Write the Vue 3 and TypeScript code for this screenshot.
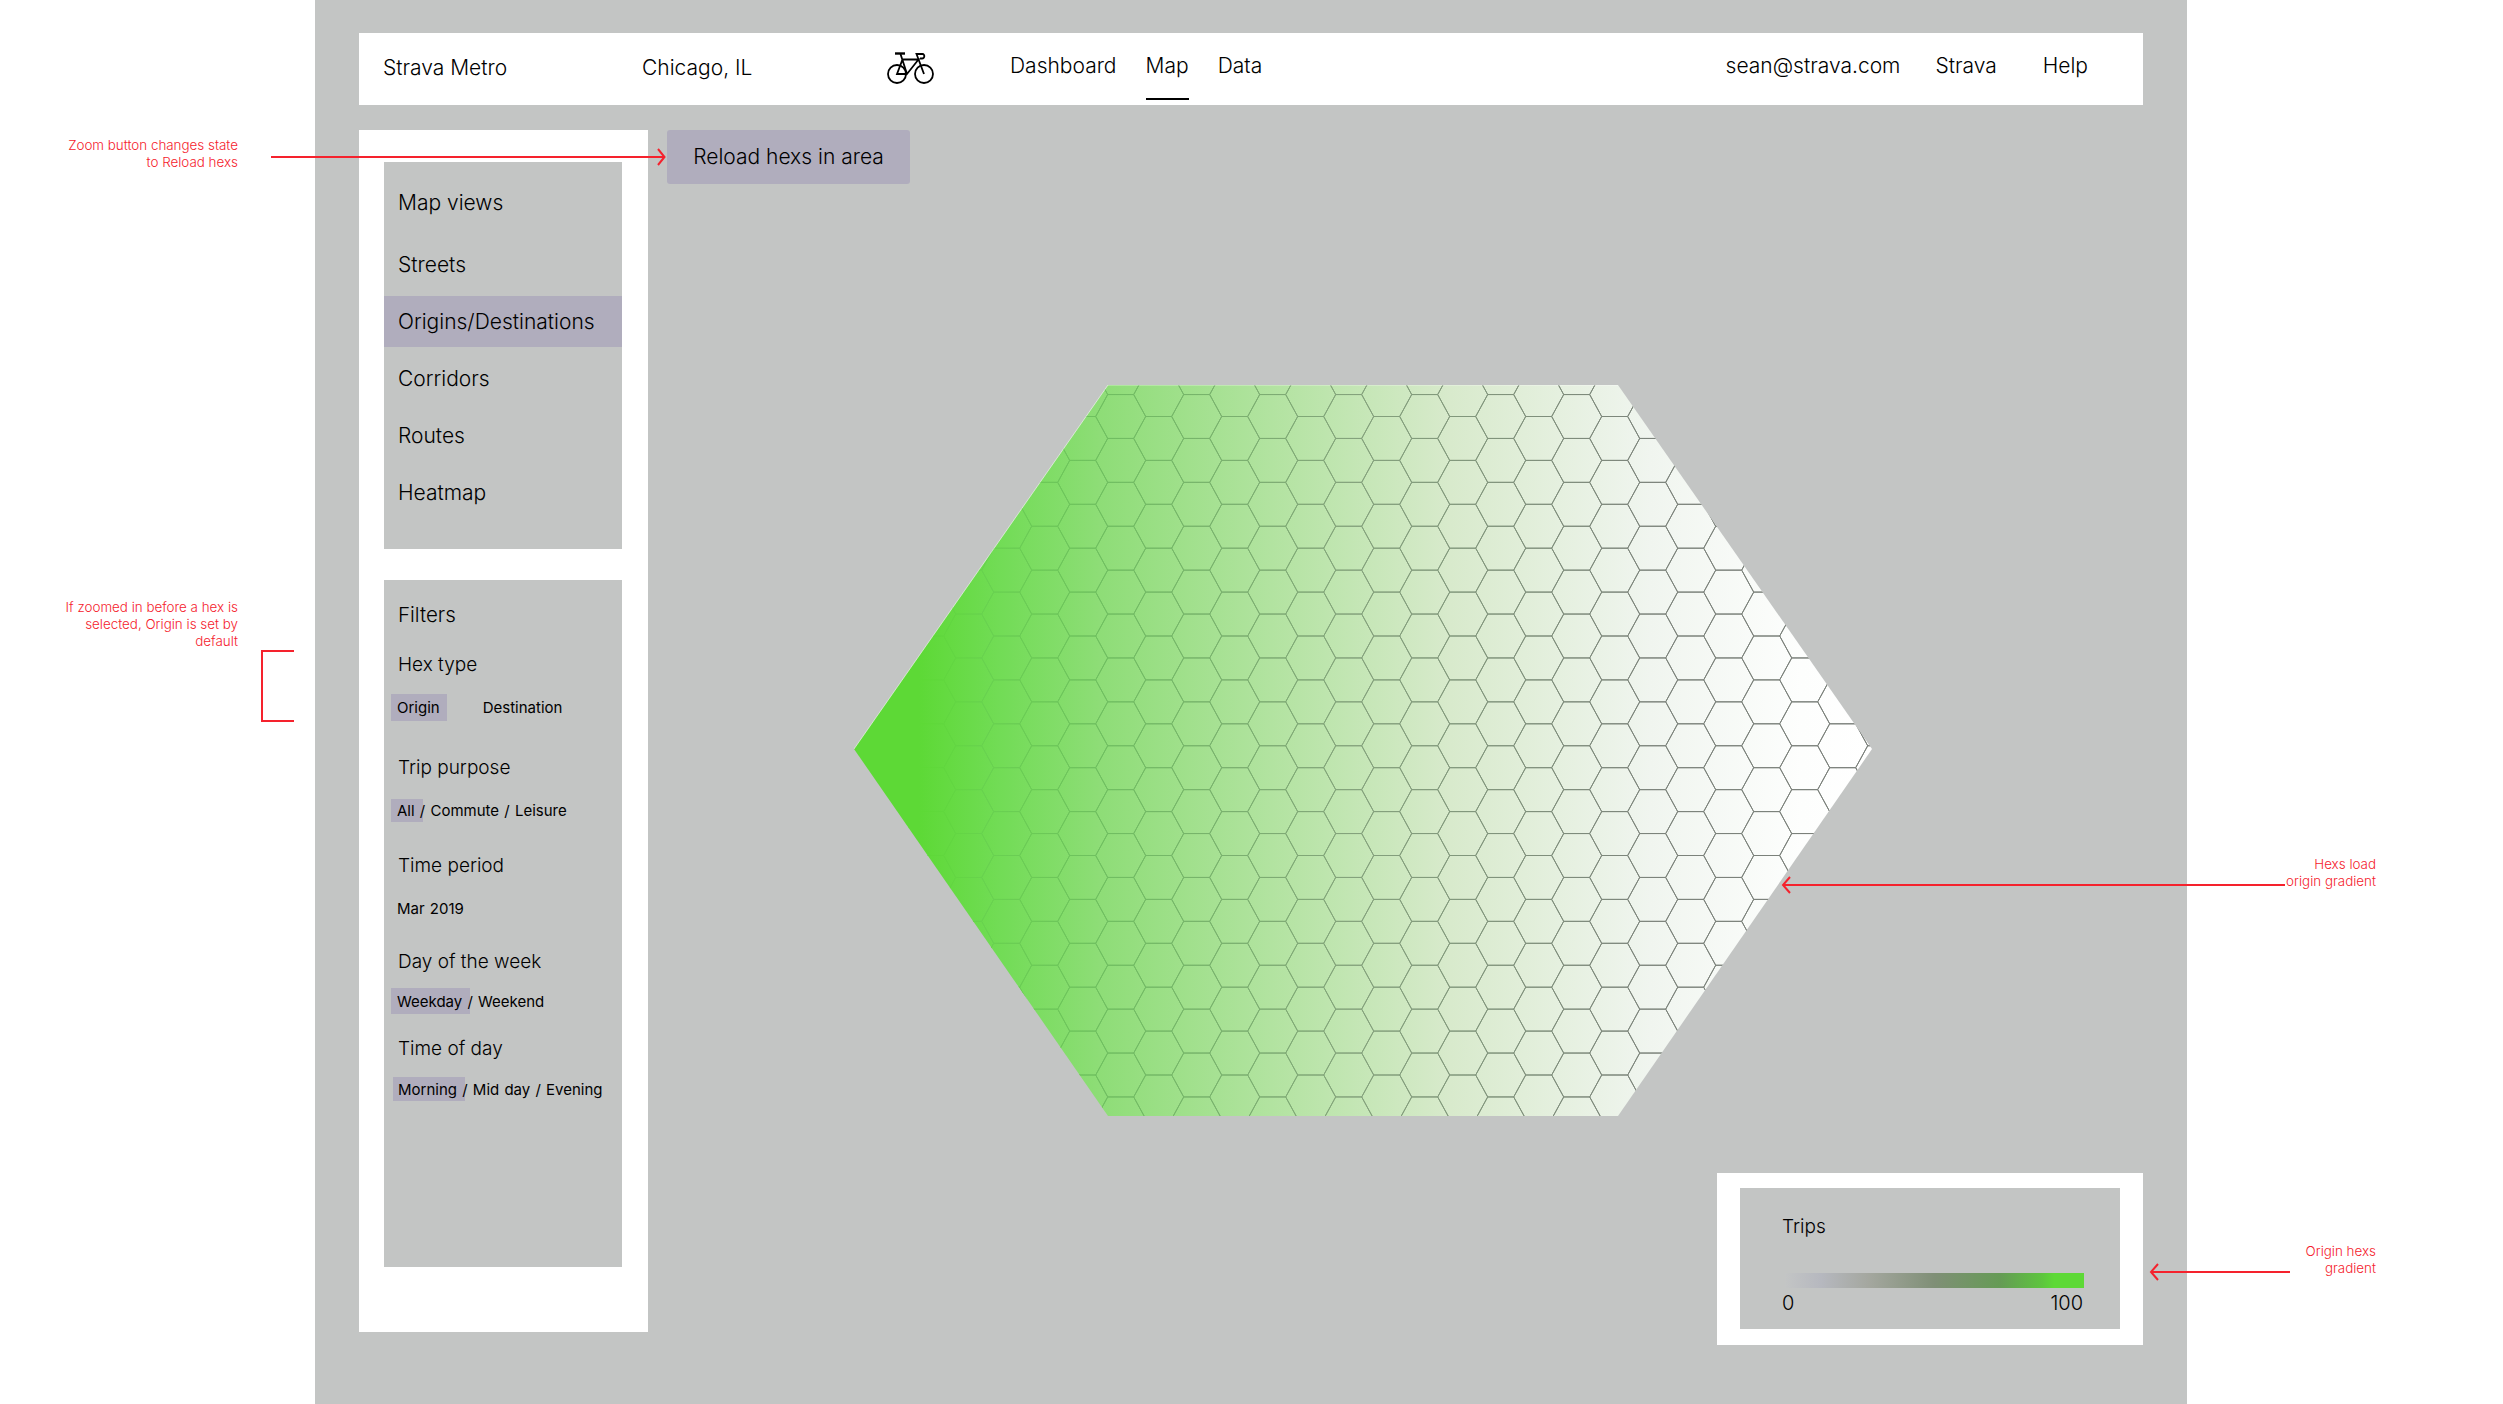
<script setup lang="ts">
interface FilterGroup { key: string; label: string; chip?: string; rest?: string; second?: string; }

const mapViews: string[] = ['Streets', 'Origins/Destinations', 'Corridors', 'Routes', 'Heatmap'];
const activeView = 'Origins/Destinations';

const groups: FilterGroup[] = [
  { key: 'hex', label: 'Hex type', chip: 'Origin', second: 'Destination' },
  { key: 'trip', label: 'Trip purpose', chip: 'All', rest: ' / Commute / Leisure' },
  { key: 'period', label: 'Time period', rest: 'Mar 2019' },
  { key: 'day', label: 'Day of the week', chip: 'Weekday', rest: ' / Weekend' },
  { key: 'tod', label: 'Time of day', chip: 'Morning', rest: ' / Mid day / Evening' },
];

// Hex grid in the local coordinates of the map svg (origin at 854,385 on the page)
const R = 25;
const EDGE = 13;
const ROW = 43.9;
const COL = 38;
const ORIGIN_X = 1652.7 - 854;
const ORIGIN_Y = 504.3 - 385;

function hexPath(cx: number, cy: number): string {
  const h = ROW / 2;
  return `M${cx - R} ${cy}L${cx - EDGE} ${cy - h}H${cx + EDGE}L${cx + R} ${cy}L${cx + EDGE} ${cy + h}H${cx - EDGE}Z`;
}

const grid: string = (() => {
  const parts: string[] = [];
  for (let c = -19; c <= 6; c++) {
    const cx = ORIGIN_X + c * COL;
    const odd = Math.abs(c) % 2 === 1;
    for (let r = -4; r <= 15; r++) {
      const cy = ORIGIN_Y + r * ROW + (odd ? ROW / 2 : 0);
      parts.push(hexPath(cx, cy));
    }
  }
  return parts.join('');
})();

const hexagon = '0,364 254,0 764,0 1018,364 764,731 254,731';
</script>

<template>
  <div class="page">
    <main class="board">
      <header class="navbar">
        <div class="brand">Strava Metro</div>
        <div class="city">Chicago, IL</div>
        <div class="bike">
          <svg width="60" height="40" viewBox="0 0 60 40" fill="none" stroke="#000" stroke-width="1.8">
            <circle cx="17" cy="26" r="9" />
            <circle cx="44" cy="26" r="9" />
            <path d="M15 5.5H25" stroke-width="2.4" />
            <path d="M20.5 6L27 26L38.5 11.5H22.5L17 26H27" />
            <path d="M44 26L36.5 6H42.5C45 6 45 10.5 42 10.5H40" />
          </svg>
        </div>
        <nav class="links">
          <a class="link">Dashboard</a>
          <a class="link current">Map</a>
          <a class="link">Data</a>
        </nav>
        <div class="account">
          <a class="link email">sean@strava.com</a>
          <a class="link org">Strava</a>
          <a class="link">Help</a>
        </div>
      </header>

      <div class="workspace">
        <aside class="sidebar">
          <section class="panel views">
            <h2 class="view-title">Map views</h2>
            <ul class="view-list">
              <li v-for="v in mapViews" :key="v" class="view" :class="{ active: v === activeView }">{{ v }}</li>
            </ul>
          </section>
          <section class="panel filters">
            <h2 class="filter-title">Filters</h2>
            <div v-for="g in groups" :key="g.key" class="group" :class="g.key">
              <div class="group-label">{{ g.label }}</div>
              <div class="options">
                <span v-if="g.chip" class="chip">{{ g.chip }}</span>
                <span v-if="g.rest" class="rest">{{ g.rest }}</span>
                <span v-if="g.second" class="second">{{ g.second }}</span>
              </div>
            </div>
          </section>
        </aside>

        <section class="map">
          <button class="reload" type="button">Reload hexs in area</button>
          <svg class="hexmap" width="1018" height="731" viewBox="0 0 1018 731">
            <defs>
              <linearGradient id="fillGrad" gradientUnits="userSpaceOnUse" x1="0" y1="0" x2="1018" y2="0">
                <stop offset="0.064" stop-color="#5dd936" />
                <stop offset="0.144" stop-color="#72dc56" />
                <stop offset="0.242" stop-color="#8edd77" />
                <stop offset="0.438" stop-color="#b8e4a7" />
                <stop offset="0.586" stop-color="#d8eacc" />
                <stop offset="0.782" stop-color="#f0f5ef" />
                <stop offset="0.93" stop-color="#fdfefd" />
                <stop offset="1" stop-color="#ffffff" />
              </linearGradient>
              <linearGradient id="lineGrad" gradientUnits="userSpaceOnUse" x1="0" y1="0" x2="1018" y2="0">
                <stop offset="0.07" stop-color="#5dd936" />
                <stop offset="0.13" stop-color="#68d24f" />
                <stop offset="0.242" stop-color="#6fbf60" />
                <stop offset="0.49" stop-color="#84a27c" />
                <stop offset="0.782" stop-color="#7c837b" />
                <stop offset="1" stop-color="#7a7f7a" />
              </linearGradient>
              <clipPath id="hexClip">
                <polygon :points="hexagon" />
              </clipPath>
            </defs>
            <polygon :points="hexagon" fill="url(#fillGrad)" />
            <g clip-path="url(#hexClip)">
              <path :d="grid" fill="none" stroke="url(#lineGrad)" stroke-width="1" />
            </g>
            <polyline points="0,364 254,0 764,0" fill="none" stroke="#fff" stroke-opacity="0.55" stroke-width="1" />
          </svg>
          <div class="legend">
            <div class="legend-inner">
              <div class="legend-title">Trips</div>
              <div class="legend-bar"></div>
              <div class="legend-scale"><span>0</span><span>100</span></div>
            </div>
          </div>
        </section>
      </div>
    </main>

    <!-- Red design annotations lying over the board -->
    <svg class="marks" width="2503" height="1404" viewBox="0 0 2503 1404" fill="none" stroke="#f5222d" stroke-width="2">
      <path d="M271 157H664M658 149L664.5 157L658 165" />
      <path d="M294 651H262V721H294" />
      <path d="M2285 885H1783M1790 877L1783 885L1790 893" />
      <path d="M2290 1272H2151M2158 1264L2151 1272L2158 1280" />
    </svg>
    <p class="note note-zoom">Zoom button changes state<br />to Reload hexs</p>
    <p class="note note-default">If zoomed in before a hex is<br />selected, Origin is set by<br />default</p>
    <p class="note note-load">Hexs load<br />origin gradient</p>
    <p class="note note-legend">Origin hexs<br />gradient</p>
  </div>
</template>

<style>
html, body { margin: 0; background: #fff; }
</style>

<style scoped>
.page {
  position: relative;
  width: 2503px;
  height: 1404px;
  overflow: hidden;
  background: #fff;
  font-family: Inter, "Liberation Sans", sans-serif;
  font-weight: 300;
  color: #000;
  display: flex;
  justify-content: flex-start;
}
.board {
  margin-left: 315px;
  width: 1872px;
  height: 1404px;
  box-sizing: border-box;
  padding: 33px 44px 0;
  background: #c3c5c4;
}
.navbar {
  display: flex;
  align-items: flex-start;
  height: 72px;
  background: #fff;
  font-size: 21px;
  line-height: 26px;
}
.brand { width: 259px; padding: 22px 0 0 24px; }
.city { width: 244px; padding-top: 22px; }
.bike { width: 124px; height: 72px; margin-top: 15px; margin-left: -6px; margin-right: 6px; }
.bike svg { display: block; }
.links { display: flex; gap: 29px; }
.link { display: block; padding-top: 20px; }
.link.current { padding-bottom: 19px; border-bottom: 2px solid #000; }
.account { display: flex; margin-left: auto; padding-right: 55px; }
.email { margin-right: 35px; }
.org { margin-right: 46px; }

.workspace { display: flex; gap: 19px; margin-top: 25px; }
.sidebar {
  width: 289px;
  height: 1202px;
  box-sizing: border-box;
  padding: 32px 26px 0 25px;
  background: #fff;
  flex: none;
}
.panel { background: #c3c5c4; }
.views { height: 387px; padding-top: 15px; box-sizing: border-box; }
.view-title, .filter-title { margin: 0; font: inherit; }
.view-title { height: 51px; line-height: 51px; padding-left: 14px; font-size: 21px; margin-bottom: 11px; }
.view-list { list-style: none; margin: 0; padding: 0; display: flex; flex-direction: column; gap: 6px; }
.view { height: 51px; line-height: 52px; padding-left: 14px; font-size: 21px; }
.view.active { background: #b0adbd; }

.filters { margin-top: 31px; height: 687px; padding-top: 22px; box-sizing: border-box; }
.filter-title { height: 26px; line-height: 26px; padding-left: 14px; font-size: 20.5px; }
.group-label { height: 26px; line-height: 26px; padding-left: 14px; font-size: 19px; }
.options { display: flex; align-items: center; padding-left: 7px; font-size: 15px; font-weight: 400; white-space: pre; word-spacing: 1px; }
.chip { align-self: stretch; display: flex; align-items: center; padding: 0 8px 0 6px; margin-right: -8px; background: #b0adbd; }
.rest { position: relative; }
.hex { margin-top: 24px; }
.hex .options { margin-top: 16px; height: 27px; }
.hex .chip { padding-right: 7px; margin-right: 0; }
.second { margin-left: 36px; }
.trip { margin-top: 33.5px; }
.trip .options { margin-top: 18.5px; height: 23px; }
.period { margin-top: 31px; }
.period .options { margin-top: 18px; height: 23px; padding-left: 13px; }
.day { margin-top: 29px; }
.day .options { margin-top: 13px; height: 26px; }
.tod { margin-top: 22px; }
.tod .options { margin-top: 15px; height: 24px; padding-left: 9px; }
.tod .chip { padding-left: 5px; }

.map { flex: 1; display: flex; flex-direction: column; align-items: flex-start; }
.reload {
  width: 243px;
  height: 54px;
  padding: 0 0 2px;
  border: none;
  border-radius: 3px;
  background: #b0adbd;
  color: #000;
  font: inherit;
  font-size: 21px;
}
.hexmap { display: block; margin-top: 201px; margin-left: 187px; flex: none; }
.legend {
  align-self: flex-end;
  margin-top: 57px;
  width: 426px;
  height: 172px;
  box-sizing: border-box;
  padding: 15px 23px 16px 23px;
  background: #fff;
}
.legend-inner {
  height: 100%;
  box-sizing: border-box;
  padding: 26px 37px 0 42px;
  background: #c3c5c4;
}
.legend-title { height: 26px; line-height: 26px; font-size: 19px; }
.legend-bar {
  height: 15px;
  margin-top: 33px;
  margin-left: 3px;
  margin-right: -1px;
  background: linear-gradient(90deg, #c3c5c5 0%, #b6b8bf 12%, #a4a79f 28%, #7f8f76 50%, #659b55 72%, #5dc53e 86%, #5dd936 90%);
}
.legend-scale {
  display: flex;
  justify-content: space-between;
  margin-top: 2px;
  height: 26px;
  line-height: 26px;
  font-size: 20px;
}

.marks { position: absolute; left: 0; top: 0; pointer-events: none; }
.note {
  position: absolute;
  margin: 0;
  font-size: 13.4px;
  line-height: 17px;
  color: #f5222d;
  text-align: right;
  font-weight: 300;
  white-space: nowrap;
}
.note-zoom { right: 2265px; top: 137px; }
.note-default { right: 2265px; top: 599px; }
.note-load { right: 127px; top: 856px; }
.note-legend { right: 127px; top: 1243px; }
</style>
